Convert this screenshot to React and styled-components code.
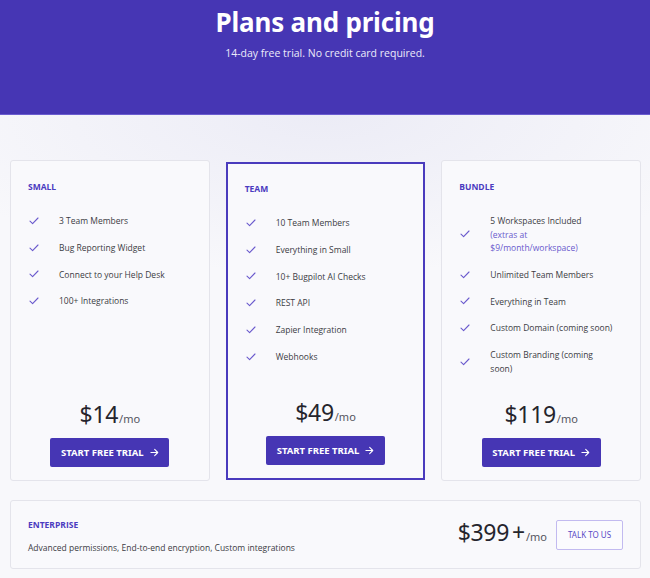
import React from 'react'
import styled, { createGlobalStyle } from 'styled-components'

const Global = createGlobalStyle`
  body {
    margin: 0;
    font-family: "Open Sans", "Noto Sans", sans-serif;
    background: #f8f8fb;
    color: #2b2b33;
  }
`

const Page = styled.div`
  min-height: 578px;
  background: radial-gradient(ellipse 420px 160px at 50% 115px, #ececf6 0%, #f3f3f9 60%, #f8f8fb 100%);
`

const Hero = styled.header`
  height: 115px;
  background: #4636b4;
  border-bottom: 1px solid #6a5ccf;
  box-sizing: border-box;
  text-align: center;
  color: #fff;
  padding-top: 4px;
`

const Title = styled.h1`
  margin: 0;
  font-family: "Noto Sans", "Open Sans", sans-serif;
  font-size: 26px;
  font-weight: 700;
  line-height: 36px;
  letter-spacing: -0.2px;
`

const Subtitle = styled.p`
  margin: 5px 0 0;
  font-size: 10.5px;
  line-height: 16px;
  color: #ecebfa;
`

const Main = styled.main`
  padding: 45px 9px 9px 10px;
  display: flex;
  flex-direction: column;
  gap: 19px;
`

const Grid = styled.div`
  display: grid;
  grid-template-columns: repeat(3, 1fr);
  gap: 16px;
`

const Card = styled.section`
  display: flex;
  flex-direction: column;
  height: ${p => (p.$featured ? '318px' : '321px')};
  margin-top: ${p => (p.$featured ? '2px' : '0')};
  box-sizing: border-box;
  background: #f9f9fc;
  border: ${p => (p.$featured ? '2px solid #4a3bbd' : '1px solid #e4e4eb')};
  border-radius: ${p => (p.$featured ? '0' : '3px')};
  padding: ${p => (p.$featured ? '19px 17px 13px' : '20px 17px 13px')};
`

const PlanName = styled.h3`
  margin: 0;
  font-size: 8.5px;
  font-weight: 700;
  line-height: 12px;
  color: #4b3bc0;
  text-transform: uppercase;
`

const Features = styled.ul`
  list-style: none;
  margin: 21px 0 0;
  padding: 0;
  display: flex;
  flex-direction: column;
  gap: 13.3px;
`

const Feature = styled.li`
  display: flex;
  align-items: center;
  gap: 20px;
  padding-left: 1px;
  font-size: 8.5px;
  line-height: 13.5px;
  color: #3c3c44;
`

const Note = styled.span`
  display: block;
  color: #6a5acd;
`

const Bottom = styled.div`
  margin-top: auto;
  display: flex;
  flex-direction: column;
  align-items: center;
  gap: 4px;
`

const Price = styled.div`
  display: flex;
  align-items: baseline;
  font-family: "Noto Sans", "Open Sans", sans-serif;
  font-size: 23px;
  line-height: 30px;
  color: #25252c;
  letter-spacing: -0.3px;
`

const Per = styled.span`
  font-size: 11px;
  color: #55555e;
  margin-left: 1px;
  letter-spacing: 0;
`

const Button = styled.button`
  display: flex;
  align-items: center;
  justify-content: center;
  gap: 6px;
  width: 119px;
  height: 29px;
  border: none;
  border-radius: 2px;
  background: #4636b4;
  color: #fff;
  font-family: "Noto Sans", "Open Sans", sans-serif;
  font-size: 9.5px;
  font-weight: 700;
  text-transform: uppercase;
  cursor: pointer;
`

const Enterprise = styled.section`
  display: flex;
  align-items: center;
  justify-content: space-between;
  height: 69px;
  box-sizing: border-box;
  padding: 0 17px 0 17px;
  background: #f9f9fc;
  border: 1px solid #e4e4eb;
  border-radius: 3px;
`

const EntText = styled.div`
  display: flex;
  flex-direction: column;
  gap: 11px;
  padding-top: 3px;
`

const EntDesc = styled.p`
  margin: 0;
  font-size: 8.5px;
  line-height: 12px;
  color: #3c3c44;
`

const EntRight = styled.div`
  display: flex;
  align-items: center;
  gap: 9px;
`

const Plus = styled.span`
  margin-left: 3px;
`

const Outline = styled.button`
  width: 67px;
  height: 30px;
  background: #fbfbfe;
  border: 1px solid #c2baf0;
  border-radius: 2px;
  color: #5a4bc6;
  font-family: "Noto Sans", "Open Sans", sans-serif;
  font-size: 8px;
  text-transform: uppercase;
  cursor: pointer;
`

const Check = () => (
  <svg width="10" height="8" viewBox="0 0 10 8" fill="none">
    <path d="M1 4.2 L3.6 6.6 L9 1" stroke="#6a5acd" strokeWidth="1.1" strokeLinecap="round" strokeLinejoin="round" />
  </svg>
)

const Arrow = () => (
  <svg width="9" height="9" viewBox="0 0 10 10" fill="none">
    <path d="M1 5 H8.5 M5.2 1.6 L8.6 5 L5.2 8.4" stroke="#fff" strokeWidth="1.2" strokeLinecap="round" strokeLinejoin="round" />
  </svg>
)

const plans = [
  { name: 'Small', price: 14, features: ['3 Team Members', 'Bug Reporting Widget', 'Connect to your Help Desk', '100+ Integrations'] },
  { name: 'Team', price: 49, featured: true, features: ['10 Team Members', 'Everything in Small', '10+ Bugpilot AI Checks', 'REST API', 'Zapier Integration', 'Webhooks'] },
  {
    name: 'Bundle',
    price: 119,
    features: [
      <>5 Workspaces Included<Note>(extras at<br />$9/month/workspace)</Note></>,
      'Unlimited Team Members',
      'Everything in Team',
      'Custom Domain (coming soon)',
      <>Custom Branding (coming<br />soon)</>,
    ],
  },
]

export default function App() {
  return (
    <Page>
      <Global />
      <Hero>
        <Title>Plans and pricing</Title>
        <Subtitle>14-day free trial. No credit card required.</Subtitle>
      </Hero>
      <Main>
        <Grid>
          {plans.map(plan => (
            <Card key={plan.name} $featured={plan.featured}>
              <PlanName>{plan.name}</PlanName>
              <Features>
                {plan.features.map((f, i) => (
                  <Feature key={i}>
                    <Check />
                    <div>{f}</div>
                  </Feature>
                ))}
              </Features>
              <Bottom>
                <Price>${plan.price}<Per>/mo</Per></Price>
                <Button>Start free trial <Arrow /></Button>
              </Bottom>
            </Card>
          ))}
        </Grid>
        <Enterprise>
          <EntText>
            <PlanName>Enterprise</PlanName>
            <EntDesc>Advanced permissions, End-to-end encryption, Custom integrations</EntDesc>
          </EntText>
          <EntRight>
            <Price>$399<Plus>+</Plus><Per>/mo</Per></Price>
            <Outline>Talk to us</Outline>
          </EntRight>
        </Enterprise>
      </Main>
    </Page>
  )
}
